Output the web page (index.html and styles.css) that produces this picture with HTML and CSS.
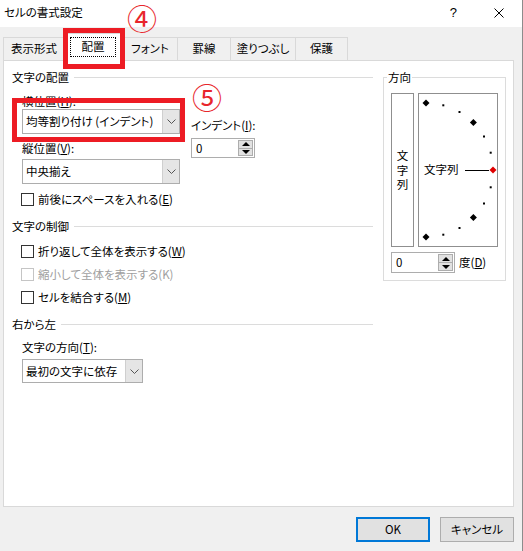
FILE: index.html
```html
<!DOCTYPE html>
<html lang="ja">
<head>
    <meta charset="UTF-8">
    <title>セルの書式設定</title>
    <link rel="stylesheet" href="styles.css">
</head>
<body>
<div class="window">
    <div class="titlebar">
        <span class="title">セルの書式設定</span>
        <span class="help">?</span>
        <svg class="close" width="10" height="10" viewBox="0 0 10 10">
            <path d="M0.5 0.5 L9.5 9.5 M9.5 0.5 L0.5 9.5" stroke="#000" stroke-width="1"/>
        </svg>
    </div>

    <div class="tabs">
        <div class="tab t1">表示形式</div>
        <div class="tab t2 active"><span class="focus">配置</span></div>
        <div class="tab t3">フォント</div>
        <div class="tab t4">罫線</div>
        <div class="tab t5">塗りつぶし</div>
        <div class="tab t6 last">保護</div>
    </div>

    <div class="panel">
        <div class="left">
            <div class="sec">文字の配置</div>
            <div class="indent row-align">
                <div class="col-align">
                    <div class="lbl lbl-first">横位置(<u>H</u>):</div>
                    <div class="combo combo-wide">
                        <span class="combo-text">均等割り付け (インデント)</span>
                        <span class="combo-btn">
                            <svg width="9" height="5" viewBox="0 0 9 5"><path d="M0.5 0.5 L4.5 4.5 L8.5 0.5" fill="none" stroke="#555"/></svg>
                        </span>
                    </div>
                    <div class="lbl lbl-second">縦位置(<u>V</u>):</div>
                    <div class="combo combo-wide combo-second">
                        <span class="combo-text">中央揃え</span>
                        <span class="combo-btn">
                            <svg width="9" height="5" viewBox="0 0 9 5"><path d="M0.5 0.5 L4.5 4.5 L8.5 0.5" fill="none" stroke="#555"/></svg>
                        </span>
                    </div>
                </div>
                <div class="col-indent">
                    <div class="lbl">インデント(<u>I</u>):</div>
                    <div class="spin spin-indent">
                        <span class="spin-val">0</span>
                        <span class="spin-btns">
                            <span class="spin-btn"><i class="tri-up"></i></span>
                            <span class="spin-btn"><i class="tri-down"></i></span>
                        </span>
                    </div>
                </div>
            </div>
            <label class="check indent check-space"><span class="box"></span>前後にスペースを入れる(<u>E</u>)</label>

            <div class="sec sec-gap">文字の制御</div>
            <label class="check indent check-first"><span class="box"></span>折り返して全体を表示する(<u>W</u>)</label>
            <label class="check indent disabled"><span class="box"></span>縮小して全体を表示する(K)</label>
            <label class="check indent"><span class="box"></span>セルを結合する(<u>M</u>)</label>

            <div class="sec sec-gap">右から左</div>
            <div class="indent">
                <div class="lbl lbl-dir">文字の方向(<u>T</u>):</div>
                <div class="combo combo-dir">
                    <span class="combo-text">最初の文字に依存</span>
                    <span class="combo-btn">
                        <svg width="9" height="5" viewBox="0 0 9 5"><path d="M0.5 0.5 L4.5 4.5 L8.5 0.5" fill="none" stroke="#555"/></svg>
                    </span>
                </div>
            </div>
        </div>

        <div class="group">
            <span class="group-label">方向</span>
            <div class="orient">
                <div class="vbox">文字列</div>
                <div class="arc">
                    <svg width="78" height="152" viewBox="0 0 78 152">
                        <!-- 15度ごとの目盛り -->
                        <rect x="23.3" y="10.3" width="2" height="2"/>
                        <rect x="39.5" y="17" width="2" height="2"/>
                        <rect x="64" y="41.5" width="2" height="2"/>
                        <rect x="70.7" y="57.7" width="2" height="2"/>
                        <rect x="70.7" y="92.3" width="2" height="2"/>
                        <rect x="64" y="108.5" width="2" height="2"/>
                        <rect x="39.5" y="133" width="2" height="2"/>
                        <rect x="23.3" y="139.7" width="2" height="2"/>
                        <path d="M7 5.5 L10.5 9 L7 12.5 L3.5 9 Z"/>
                        <path d="M54.4 25.1 L57.9 28.6 L54.4 32.1 L50.9 28.6 Z"/>
                        <path d="M54.4 119.9 L57.9 123.4 L54.4 126.9 L50.9 123.4 Z"/>
                        <path d="M7 139.5 L10.5 143 L7 146.5 L3.5 143 Z"/>
                        <line x1="46" y1="76.5" x2="70" y2="76.5" stroke="#000" stroke-width="1"/>
                        <path d="M74 72.5 L77.5 76 L74 79.5 L70.5 76 Z" fill="#e00000"/>
                    </svg>
                    <span class="arc-text">文字列</span>
                </div>
            </div>
            <div class="deg-row">
                <div class="spin">
                    <span class="spin-val">0</span>
                    <span class="spin-btns">
                        <span class="spin-btn"><i class="tri-up"></i></span>
                        <span class="spin-btn"><i class="tri-down"></i></span>
                    </span>
                </div>
                <span>度(<u>D</u>)</span>
            </div>
        </div>
    </div>

    <div class="buttons">
        <button class="btn btn-default">OK</button>
        <button class="btn">キャンセル</button>
    </div>

    <!-- 赤枠と番号の注釈 -->
    <div class="mark mark-tab"></div>
    <div class="mark mark-combo"></div>
    <span class="num num4">④</span>
    <span class="num num5">⑤</span>
</div>
</body>
</html>
```

FILE: styles.css
```css
/* 全体 */
* {
    box-sizing: border-box;
}

body {
    margin: 0;
    width: 523px;
    height: 551px;
    overflow: hidden;
    background: #f0f0f0;
    font-family: "Noto Sans CJK JP", sans-serif;
    font-size: 11.5px;
    line-height: 15px;
    font-feature-settings: "palt";
    color: #000;
}

.window {
    position: relative;
    height: 551px;
    border-right: 1px solid #8c8c8c;
}

/* タイトルバー */
.titlebar {
    height: 27px;
    background: #fff;
    display: flex;
    align-items: center;
    padding: 0 18px 2px 4px;
}

.title {
    flex: 1;
}

.help {
    font-family: "Liberation Sans", sans-serif;
    font-size: 13px;
    margin-right: 37px;
}

/* タブ */
.tabs {
    height: 33px;
    display: flex;
    align-items: flex-end;
    padding-left: 3px;
}

.tab {
    height: 23px;
    border-top: 1px solid #d9d9d9;
    border-left: 1px solid #d9d9d9;
    background: #f0f0f0;
    display: flex;
    align-items: center;
    justify-content: center;
    padding-bottom: 1px;
}

.tab.last {
    border-right: 1px solid #d9d9d9;
}

.t1 { width: 61px; }
.t2 { width: 58px; }
.t3 { width: 55px; }
.t4 { width: 53px; }
.t5 { width: 65px; }
.t6 { width: 53px; }

.tab.active {
    position: relative;
    z-index: 1;
    height: 28px;
    margin-bottom: -1px;
    background: #fff;
    border-right: 1px solid #d9d9d9;
    padding-bottom: 2px;
}

.focus {
    display: flex;
    align-items: center;
    justify-content: center;
    width: 46px;
    height: 20px;
    border: 1px dotted #000;
}

/* 設定パネル */
.panel {
    margin-left: 3px;
    width: 511px;
    height: 447px;
    background: #fff;
    border: 1px solid #d9d9d9;
    display: flex;
    padding: 8px 0 0 8px;
}

.left {
    width: 361px;
}

.sec {
    display: flex;
    align-items: center;
    height: 16px;
}

.sec::after {
    content: "";
    flex: 1;
    border-top: 1px solid #dcdcdc;
    margin-left: 5px;
}

.sec-gap {
    margin-top: 11px;
}

.indent {
    margin-left: 10px;
}

.lbl {
    height: 15px;
}

.lbl-first {
    margin-top: 9px;
}

.lbl-second {
    margin-top: 7px;
}

.lbl-dir {
    margin-top: 8px;
    margin-bottom: 4px;
}

.row-align {
    display: flex;
}

.col-indent {
    margin-left: 11px;
    padding-top: 33px;
}

/* コンボボックス */
.combo {
    display: flex;
    height: 25px;
    border: 1px solid #adadad;
    background: #fff;
}

.combo-wide {
    width: 158px;
}

.combo-second {
    margin-top: 3px;
}

.combo-dir {
    width: 121px;
    height: 24px;
}

.combo-text {
    flex: 1;
    padding-left: 3px;
    display: flex;
    align-items: center;
    white-space: nowrap;
}

.combo-btn {
    width: 17px;
    background: #e5e5e5;
    border-left: 1px solid #cfcfcf;
    display: flex;
    align-items: center;
    justify-content: center;
}

/* スピンボックス */
.spin {
    display: flex;
    width: 64px;
    height: 21px;
    border: 1px solid #adadad;
    background: #fff;
}

.spin-indent {
    margin-top: 5px;
    height: 20px;
}

.spin-val {
    flex: 1;
    padding-left: 4px;
    display: flex;
    align-items: center;
}

.spin-btns {
    width: 16px;
    display: flex;
    flex-direction: column;
    padding: 1px 1px 1px 0;
}

.spin-btn {
    flex: 1;
    background: #e1e1e1;
    border: 1px solid #adadad;
    display: flex;
    align-items: center;
    justify-content: center;
}

.spin-btn + .spin-btn {
    border-top: none;
}

.tri-up {
    border-left: 4px solid transparent;
    border-right: 4px solid transparent;
    border-bottom: 4px solid #000;
}

.tri-down {
    border-left: 4px solid transparent;
    border-right: 4px solid transparent;
    border-top: 4px solid #000;
}

/* チェックボックス */
.check {
    display: flex;
    align-items: center;
    height: 16px;
    margin-top: 7px;
}

.check-first {
    margin-top: 9px;
}

.box {
    width: 13px;
    height: 13px;
    border: 1px solid #333;
    background: #fff;
    margin-right: 4px;
    margin-left: -1px;
}

.check.disabled {
    color: #a0a0a0;
}

.check.disabled .box {
    border-color: #c5c5c5;
}

/* 方向グループ */
.group {
    position: relative;
    margin-top: 8px;
    margin-left: 10px;
    width: 123px;
    height: 204px;
    border: 1px solid #dcdcdc;
    padding: 15px 0 0 7px;
}

.group-label {
    position: absolute;
    top: -8px;
    left: 3px;
    background: #fff;
    padding: 0 1px;
}

.orient {
    display: flex;
    gap: 4px;
}

.vbox {
    width: 23px;
    height: 154px;
    border: 1px solid #8f8f8f;
    display: flex;
    align-items: center;
    justify-content: center;
    text-align: center;
    line-height: 14.5px;
    padding: 0 4px;
}

.arc {
    position: relative;
    width: 80px;
    height: 154px;
    border: 1px solid #8f8f8f;
}

.arc svg {
    display: block;
}

.arc-text {
    position: absolute;
    left: 5px;
    top: 68px;
}

.deg-row {
    display: flex;
    align-items: center;
    gap: 4px;
    margin-top: 5px;
}

/* ボタン */
.buttons {
    display: flex;
    justify-content: flex-end;
    gap: 10px;
    padding: 10px 8px 0 0;
}

.btn {
    width: 74px;
    height: 25px;
    background: #e1e1e1;
    border: 1px solid #adadad;
    font: inherit;
    font-feature-settings: "palt";
    color: #000;
    padding: 0;
}

.btn-default {
    border: 2px solid #0078d7;
}

/* 注釈 */
.mark {
    position: absolute;
    border: 5px solid #ed1c24;
    z-index: 2;
}

.mark-tab {
    left: 63px;
    top: 28px;
    width: 62px;
    height: 41px;
}

.mark-combo {
    left: 12px;
    top: 98px;
    width: 173px;
    height: 44px;
}

.num {
    position: absolute;
    color: #e8262c;
    font-size: 30px;
    line-height: 34px;
    font-feature-settings: normal;
}

.num4 {
    left: 127px;
    top: 0;
}

.num5 {
    left: 192px;
    top: 79px;
}
```
